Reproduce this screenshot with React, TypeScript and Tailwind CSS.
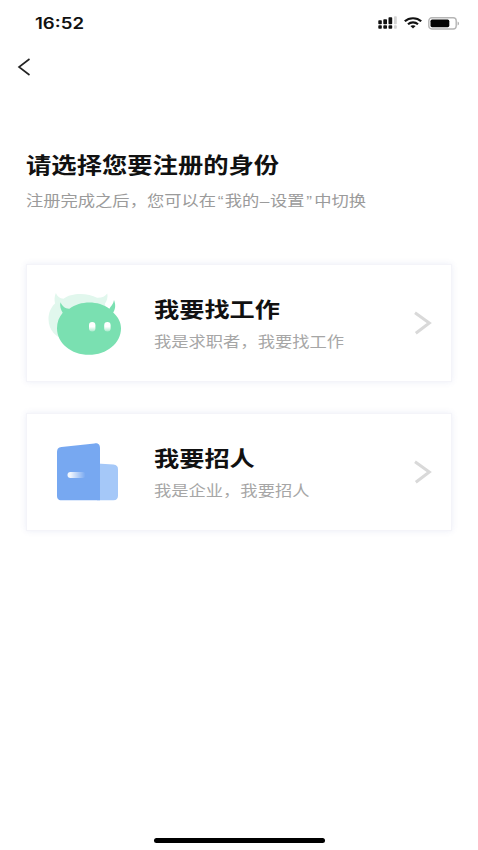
import React from 'react';

interface RoleCardProps {
  title: string;
  description: string;
  icon: React.ReactNode;
}

const SignalIcon = () => (
  <svg width="20" height="14" viewBox="0 0 20 14" fill="#111">
    <rect x="0.3" y="4.3" width="3.5" height="3.9" rx="0.8" />
    <rect x="5.3" y="3.3" width="3.7" height="4.9" rx="0.8" />
    <rect x="10.5" y="1.3" width="3.7" height="6.9" rx="0.8" />
    <rect x="16" y="0.3" width="2.8" height="7.9" rx="0.8" fill="#d4d4d4" />
    <rect x="0.3" y="9.3" width="3.5" height="3.4" rx="0.8" />
    <rect x="5.3" y="9.3" width="3.7" height="3.4" rx="0.8" />
    <rect x="10.5" y="9.3" width="3.7" height="3.4" rx="0.8" />
    <rect x="16" y="9.3" width="2.8" height="3.4" rx="0.8" fill="#d4d4d4" />
  </svg>
);

const WifiIcon = () => (
  <svg width="18" height="12" viewBox="0 0 18 12" fill="none" stroke="#111" strokeWidth="2.2">
    <path d="M0.8 4.3C5.2 0.2 12.8 0.2 17.2 4.3" />
    <path d="M4 7.3c2.8-2.5 7.2-2.5 10 0" />
    <path d="M6.4 9.1c1.5-1.2 3.7-1.2 5.2 0L9 11.4z" fill="#111" stroke="none" />
  </svg>
);

const BatteryIcon = () => (
  <svg width="32" height="13" viewBox="0 0 32 13">
    <rect x="0.8" y="0.8" width="27.4" height="11.2" rx="3" fill="none" stroke="#b5b5b5" strokeWidth="1.4" />
    <rect x="2.5" y="2.6" width="18.8" height="7.6" rx="1.6" fill="#050505" />
    <path d="M29.7 4.4c1.5.6 1.5 3.4 0 4z" fill="#999" />
  </svg>
);

const JobSeekerIcon = () => (
  <svg width="76" height="66" viewBox="0 0 76 66">
    <defs>
      <linearGradient id="eye" x1="0" y1="0" x2="0" y2="1">
        <stop offset="0.5" stopColor="#fff" />
        <stop offset="1" stopColor="#fff" stopOpacity="0.35" />
      </linearGradient>
    </defs>
    <path
      d="M8.9 3c1.2 3.4 3.8 5.4 7.6 5.7C24 2.5 41 2.5 50 7.8c5 .2 8-1.3 10.3-4.3.8 4-.5 7.3-2.3 10.1L60 30 20 50C9 48 1.5 40 1.5 29c0-6 2.3-11.5 6.500-15.600C7.300 10 7.300 6.500 8.900 3z"
      fill="#e1f7ed"
    />
    <path
      d="M13.500 12.300c2 4 4.800 6.600 8.900 6.400 11-8.200 29-8.200 40 0C64 16 66.200 14.500 67 10c1.500 4 2 8.200-.8 12.500C71 27 74 32 74 38.200 74 53 60 64.800 42 64.800S10 53 10 38.200c0-6 2-11.200 5.700-15.500-2-3.200-3.200-7-2.200-10.400z"
      fill="#7ae0b1"
    />
    <rect x="42" y="32" width="6.400" height="9.500" rx="3.200" fill="url(#eye)" />
    <rect x="57.200" y="32" width="6.400" height="9.500" rx="3.200" fill="url(#eye)" />
  </svg>
);

const CompanyIcon = () => (
  <svg width="76" height="66" viewBox="0 0 76 66">
    <defs>
      <linearGradient id="handle" x1="0" y1="0" x2="1" y2="0">
        <stop offset="0.15" stopColor="#fff" stopOpacity="0.9" />
        <stop offset="1" stopColor="#fff" stopOpacity="0" />
      </linearGradient>
    </defs>
    <path d="M50 24.500l16.500 1c3 .3 4.500 1.800 4.500 4.800V56.500c0 3-1.500 4.800-4.500 4.800H50z" fill="#a5c8f8" />
    <path
      d="M14.500 8L47.500 4.400c4-.4 5.500 1.500 5.500 5V61.300H14.500C11 61.300 10 59.500 10 56.500v-43c0-3.500 1.200-5.100 4.500-5.500z"
      fill="#77a8f1"
    />
    <rect x="20.500" y="33" width="18" height="6" rx="3" fill="url(#handle)" />
  </svg>
);

const RoleCard: React.FC<RoleCardProps> = ({ title, description, icon }) => (
  <button className="flex h-[118px] w-[426px] items-center border border-[#f4f4f9] bg-white pl-[20px] pr-[19px] text-left shadow-[0_0_6px_rgba(90,105,180,0.12)]">
    <span className="shrink-0">{icon}</span>
    <span className="ml-[31px] flex flex-1 flex-col pt-px">
      <span className="origin-left scale-x-[1.2] whitespace-nowrap text-[21px] font-bold leading-[30px] text-[#111]">
        {title}
      </span>
      <span className="mt-[6px] origin-left scale-x-[1.16] whitespace-nowrap text-[14.900px] leading-[22px] text-[#a6a6a6]">
        {description}
      </span>
    </span>
    <svg width="18" height="24" viewBox="0 0 18 24" fill="none" stroke="#d9d9d9" strokeWidth="3">
      <path d="M1 1.800L15.300 12 1.800 22.200" />
    </svg>
  </button>
);

export default function App() {
  return (
    <div className="flex h-[850px] w-[478px] flex-col overflow-hidden bg-white font-['Liberation_Sans','Noto_Sans_CJK_SC',sans-serif]">
      {/* Status bar */}
      <header className="flex h-[46px] shrink-0 items-center justify-between pl-[35px] pr-[18px]">
        <span className="mt-[2px] origin-left scale-x-[1.200] font-['Inter',sans-serif] text-[15.500px] font-semibold leading-5 text-[#111]">
          16:52
        </span>
        <div className="flex items-center">
          <SignalIcon />
          <span className="ml-[6px]"><WifiIcon /></span>
          <span className="ml-[6px]"><BatteryIcon /></span>
        </div>
      </header>

      {/* Back */}
      <nav className="flex h-[42px] shrink-0 items-center pl-[17px]">
        <button aria-label="返回">
          <svg width="14" height="18" viewBox="0 0 14 18" fill="none" stroke="#222" strokeWidth="1.600">
            <path d="M12.500 1L2 9l10.500 8" />
          </svg>
        </button>
      </nav>

      <main className="flex flex-1 flex-col pl-[26px]">
        <h1 className="mt-[61px] origin-left scale-x-[1.2] whitespace-nowrap text-[21.100px] font-bold leading-[34px] text-[#111]">
          请选择您要注册的身份
        </h1>
        <p className="mt-[6px] origin-left scale-x-[1.160] whitespace-nowrap text-[14.900px] leading-[24px] text-[#9b9b9b]">
          注册完成之后，您可以在<span className="ml-[1.500px] tracking-[1px]">“</span>我的
          <span className="ml-[0.500px] tracking-[0.500px]">–</span>设置
          <span className="ml-[1.500px] tracking-[1.800px]">”</span>中切换
        </p>

        <div className="mt-[51px] flex flex-col gap-[31px]">
          <RoleCard title="我要找工作" description="我是求职者，我要找工作" icon={<JobSeekerIcon />} />
          <RoleCard title="我要招人" description="我是企业，我要招人" icon={<CompanyIcon />} />
        </div>
      </main>

      {/* Home indicator */}
      <footer className="flex shrink-0 justify-center pb-[7px]">
        <div className="h-[5px] w-[171px] rounded-full bg-black" />
      </footer>
    </div>
  );
}
